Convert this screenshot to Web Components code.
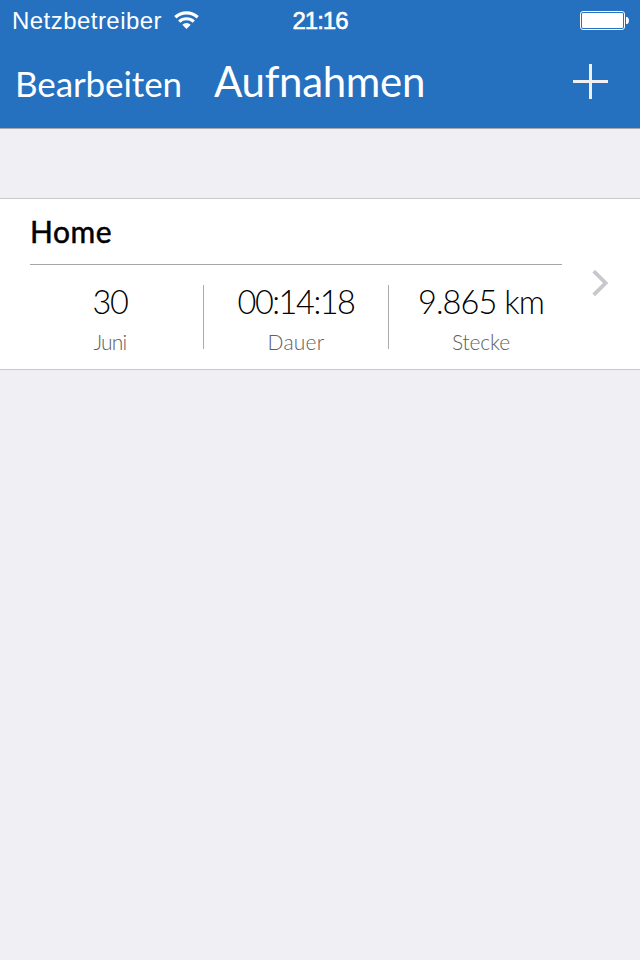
<!DOCTYPE html>
<html lang="de">
<head>
<meta charset="utf-8">
<title>Aufnahmen</title>
<style>
html,body{margin:0;height:100%;background:#efeff4}
</style>
</head>
<body>
<app-screen></app-screen>
<script>
const define = (name, html, setup) => customElements.define(name, class extends HTMLElement {
  constructor() {
    super();
    this.attachShadow({mode: 'open'}).innerHTML = html;
  }
  connectedCallback() { if (setup) setup(this); }
});

// Text tracked to fill an exact advance width.
define('fit-text', `<style>
:host{display:block;white-space:pre}
span{display:inline-block;line-height:inherit;vertical-align:top}
</style><span><slot></slot></span>`, el => {
  const span = el.shadowRoot.querySelector('span');
  const want = Number(el.getAttribute('advance'));
  const n = el.textContent.length;
  const gap = (want - span.getBoundingClientRect().width) / n;
  span.style.letterSpacing = gap + 'px';
  span.style.width = want + 'px';
});

define('wifi-icon', `<style>:host{display:block;width:26px;height:19px}svg{display:block}</style>
<svg width="26" height="19" viewBox="0 0 26 19" fill="none" stroke="#fff" stroke-width="3.2">
<path d="M1.3 6.2A16.6 16.6 0 0 1 23.7 6.2"/>
<path d="M5.2 10.6A10.8 10.8 0 0 1 19.8 10.6"/>
<path d="M12.5 18L8.3 13.8A6 6 0 0 1 16.7 13.8Z" fill="#fff" stroke="none"/></svg>`);

define('battery-icon', `<style>:host{display:block;width:50px;height:20px}svg{display:block}</style>
<svg width="50" height="20" viewBox="0 0 50 20">
<rect x=".5" y=".5" width="44" height="18" rx="2.5" fill="none" stroke="#fff"/>
<rect x="2" y="2" width="41" height="15" rx="1" fill="#fff"/>
<path d="M46 6h1.3q1.7 1 1.7 3.5t-1.7 3.5H46z" fill="#fff"/></svg>`);

define('status-bar', `<style>
:host{display:grid;grid-template-columns:1fr auto 1fr;height:40px;box-sizing:border-box;padding:0 10px 0 12px;
font:24px/42px "Liberation Sans",sans-serif;color:#fff}
.left{display:flex;gap:12px}
wifi-icon{margin-top:11px}
battery-icon{justify-self:end;margin-top:11px}
.time{-webkit-text-stroke:.6px #fff;margin-left:-2px}
</style>
<div class="left"><fit-text advance="150">Netzbetreiber</fit-text><wifi-icon></wifi-icon></div>
<fit-text class="time" advance="55">21:16</fit-text>
<battery-icon></battery-icon>`);

define('nav-bar', `<style>
:host{display:flex;height:88px;padding:0 32px 0 15px;box-sizing:border-box;color:#fff;font-family:Lato,sans-serif}
.edit{font-size:35px;line-height:86px;margin-right:32px}
.title{font-size:42px;line-height:82px}
svg{display:block;margin:24px 0 0 auto}
</style>
<fit-text class="edit" advance="167">Bearbeiten</fit-text>
<fit-text class="title" advance="211">Aufnahmen</fit-text>
<svg width="35" height="35"><path d="M0 17.5H35M17.5 0V35" stroke="#efeff4" stroke-width="3"/></svg>`);

define('record-stat', `<style>
:host{display:flex;flex-direction:column;align-items:center;height:64px;font-family:Lato,sans-serif;font-weight:300}
.value{font-size:32.5px;line-height:33px;color:#000}
.label{font-size:21px;line-height:26px;margin-top:11px;color:#606060}
</style>
<fit-text class="value"></fit-text><fit-text class="label"></fit-text>`, el => {
  for (const part of ['value', 'label']) {
    const old = el.shadowRoot.querySelector('.' + part);
    const node = document.createElement('fit-text');
    node.className = part;
    node.textContent = el.getAttribute(part);
    node.setAttribute('advance', el.getAttribute(part + '-width'));
    old.replaceWith(node);
  }
});

define('record-row', `<style>
:host{display:flex;height:172px;box-sizing:border-box;background:#fff;border-top:1px solid #c8c7cc;border-bottom:1px solid #c8c7cc;padding:0 30px}
.main{width:532px}
.name{height:65px;border-bottom:1px solid #a6a6a6;font:400 30px/65px Lato,sans-serif;color:#000;-webkit-text-stroke:.5px #000}
.stats{display:grid;grid-template-columns:173px 184px 173px;column-gap:1px;margin-top:20px;height:64px}
.stats record-stat+record-stat{border-left:1px solid #aaa;margin-left:-1px}
.first{padding-right:13px}
.last{padding-left:11px}
svg{display:block;margin:71px 0 0 30px}
</style>
<div class="main">
<fit-text class="name" advance="82">Home</fit-text>
<div class="stats">
<record-stat class="first" value="30" value-width="35" label="Juni" label-width="33"></record-stat>
<record-stat value="00:14:18" value-width="117" label="Dauer" label-width="57"></record-stat>
<record-stat class="last" value="9.865 km" value-width="126" label="Stecke" label-width="58"></record-stat>
</div></div>
<svg width="18" height="27" fill="none" stroke="#c7c7cc" stroke-width="3.8"><path d="M1.7 1.2L13.6 13L1.7 24.8"/></svg>`);

define('app-screen', `<style>
:host{display:flex;flex-direction:column;width:640px;height:960px;background:#efeff4;overflow:hidden}
header{background:#2570bf;border-bottom:1px solid #a7a7aa}
record-row{margin-top:69px}
</style>
<header><status-bar></status-bar><nav-bar></nav-bar></header>
<record-row></record-row>`);
</script>
</body>
</html>
